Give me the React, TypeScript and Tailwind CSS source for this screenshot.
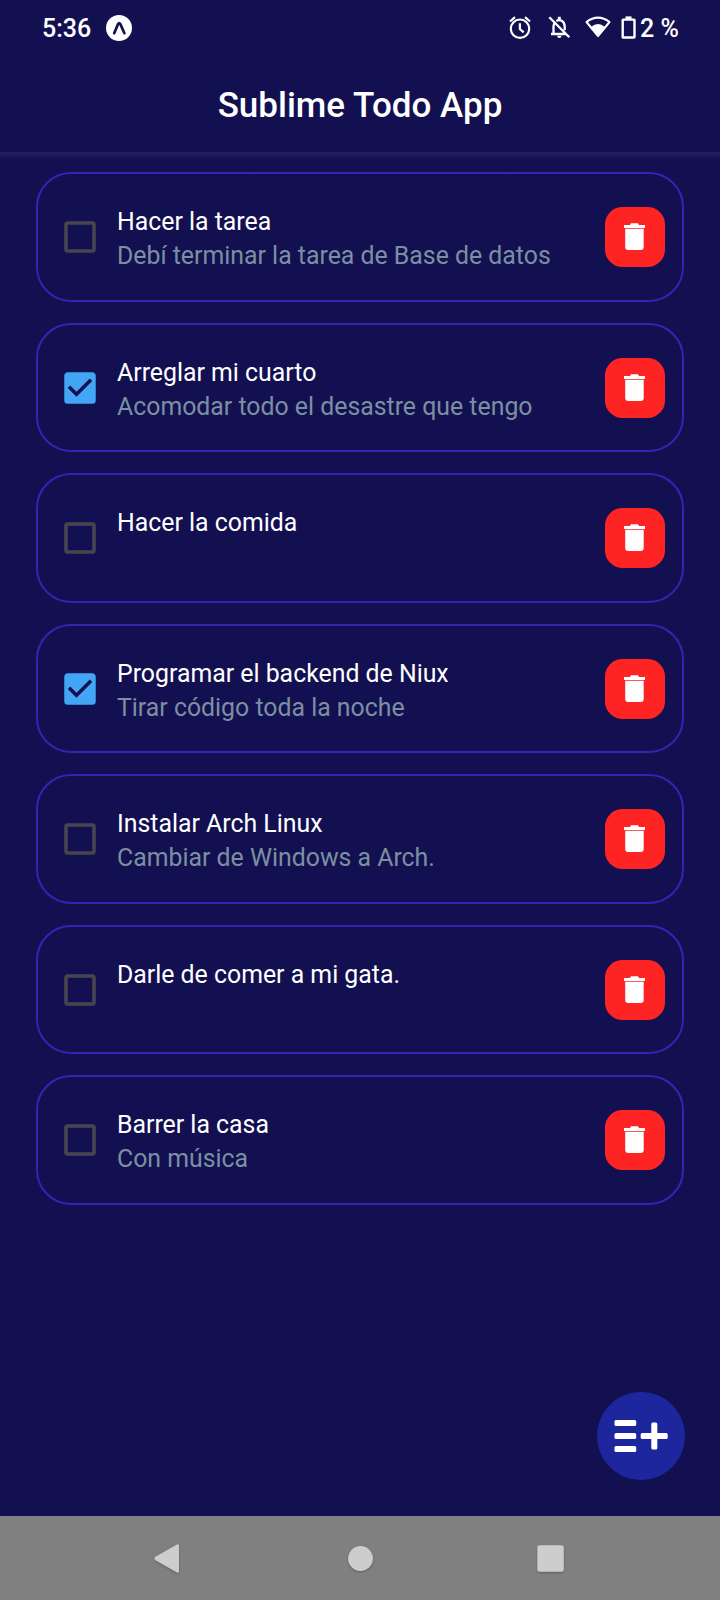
type Todo = { title: string; detail?: string; done?: boolean };

const todos: Todo[] = [
  { title: "Hacer la tarea", detail: "Debí terminar la tarea de Base de datos" },
  { title: "Arreglar mi cuarto", detail: "Acomodar todo el desastre que tengo", done: true },
  { title: "Hacer la comida" },
  { title: "Programar el backend de Niux", detail: "Tirar código toda la noche", done: true },
  { title: "Instalar Arch Linux", detail: "Cambiar de Windows a Arch." },
  { title: "Darle de comer a mi gata." },
  { title: "Barrer la casa", detail: "Con música" },
];

function StatusBar() {
  return (
    <div className="flex h-14 items-center pl-[42px] pr-[42px] text-[25px] font-medium leading-none">
      <span className="w-[64px]">5:36</span>
      <svg className="h-[26px] w-[26px]" viewBox="0 0 26 26">
        <circle cx="13" cy="13" r="13" fill="#fff" />
        <path d="M8.2 18.2 12 9.2Q13.2 7.2 14.4 9.2L18.4 18.2" fill="none" stroke="#131051" strokeWidth="2.7" strokeLinecap="round" />
      </svg>
      <div className="ml-auto flex items-center">
        <svg className="mr-[15px] h-6 w-6" viewBox="0 0 24 24" fill="none" stroke="#fff" strokeWidth="2.2">
          <circle cx="12" cy="12.7" r="9.2" />
          <path d="M11.9 7.3v5.8l3.8 3.2M2 5.5l5-4.4M22 5.5l-5-4.4" />
        </svg>
        <svg className="mr-[14px] h-6 w-6" viewBox="0 0 24 24" fill="none" stroke="#fff" strokeWidth="2.3">
          <path d="M2.3 1.2 22.3 21.2M4 18h14.5M6.5 18v-7.5q0-2 1.2-3.6M9.3 5Q12 3.4 14.8 4.8q2.9 1.7 2.9 6v3.4" />
          <path d="M12.3 .8v3" strokeWidth="3" />
          <path d="M10 19.8h4.6q-.4 2.2-2.3 2.2T10 19.8z" fill="#fff" stroke="none" />
        </svg>
        <svg className="mr-[10px] h-6 w-[26px]" viewBox="0 0 26 24">
          <path d="M1.5 6Q13-2.8 24.5 6L13 20z" fill="none" stroke="#fff" strokeWidth="2" strokeLinejoin="round" />
          <path d="M6 11Q13 5.2 20 11L13 20z" fill="#fff" />
        </svg>
        <svg className="mr-[4px] h-6 w-[15px]" viewBox="0 0 15 24">
          <path d="M4.5 .4h6v3.4h-6z" fill="#fff" />
          <rect x="1.7" y="3.6" width="11.8" height="17.9" rx="0.5" fill="none" stroke="#fff" strokeWidth="2.4" />
        </svg>
        <span className="w-[38px] whitespace-nowrap">2 %</span>
      </div>
    </div>
  );
}

function Checkbox({ done }: { done?: boolean }) {
  return (
    <svg className="h-[42px] w-[42px] shrink-0" viewBox="0 0 24 24">
      {done ? (
        <path fill="#42a5f5" d="M10 17l-5-5 1.41-1.42L10 14.17l7.59-7.59L19 8M19 3H5c-1.11 0-2 .89-2 2v14a2 2 0 002 2h14a2 2 0 002-2V5c0-1.11-.9-2-2-2z" />
      ) : (
        <rect x="4" y="4" width="16" height="16" rx="1" fill="none" stroke="#49454f" strokeWidth="2" />
      )}
    </svg>
  );
}

function TodoCard({ todo }: { todo: Todo }) {
  return (
    <li className="flex h-[129.5px] items-center rounded-[35px] border-2 border-[#3822b4] pl-[21px] pr-[17px] pt-[0.5px]">
      <Checkbox done={todo.done} />
      <div className="ml-[16px] mt-[4px] h-[68px] flex-1 whitespace-nowrap text-[24.85px] leading-[34px]">
        <p className="text-white">{todo.title}</p>
        <p className="text-[#7b8fa1]">{todo.detail}</p>
      </div>
      <button aria-label="Eliminar" className="flex h-[60px] w-[60px] items-center justify-center rounded-[17.5px] bg-[#ff2424]">
        <svg className="mb-px mr-px h-[27px] w-[21px]" viewBox="0 0 21 27" fill="#fff">
          <path d="M0 1.9h6L7 .3h7l1 1.6h6V5H0zM1.2 5.8h18.5V24a3 3 0 01-3 3H4.2a3 3 0 01-3-3z" />
        </svg>
      </button>
    </li>
  );
}

export default function App() {
  return (
    <div className="flex h-[1600px] w-[720px] flex-col bg-[#131051] font-[Roboto,sans-serif] text-white">
      <StatusBar />
      <h1 className="flex h-24 items-center justify-center pt-1 text-[35px] font-medium">Sublime Todo App</h1>
      <div className="h-5 bg-linear-to-b from-[#26205e] via-[#161253] via-30% to-[#131051] to-50%" />
      <ul className="flex flex-1 flex-col gap-[21px] px-9">
        {todos.map((t) => (
          <TodoCard key={t.title} todo={t} />
        ))}
      </ul>
      <button aria-label="Agregar" className="mb-[35.6px] ml-auto mr-[35px] flex h-[88.4px] w-[88px] shrink-0 items-center justify-center rounded-full bg-[#1e269e]">
        <svg className="h-8 w-[54px]" viewBox="0 0 54 32" fill="#fff">
          <rect x="0.5" y="0" width="21.7" height="6" rx="1.5" />
          <rect x="0.5" y="13" width="21.7" height="6" rx="1.5" />
          <rect x="0.5" y="26" width="21.7" height="6" rx="1.5" />
          <rect x="26.7" y="13" width="27" height="6" rx="1.5" />
          <rect x="37.3" y="2.5" width="6" height="27" rx="1.5" />
        </svg>
      </button>
      <nav className="flex h-[84px] shrink-0 items-center bg-[#808080] pl-[154px] pr-[156px]">
        <svg className="h-[30px] w-full overflow-visible drop-shadow-[0_1px_1px_rgba(0,0,0,0.25)]" viewBox="0 0 410 30" fill="#cdcdcd">
          <path d="M1 14Q0 15.5 1 17L23 29.5Q25 30.3 25 28V3Q25 .7 23 1.5z" />
          <circle cx="206.5" cy="15.5" r="12.4" />
          <rect x="383.3" y="2.3" width="26.5" height="26.5" rx="2" />
        </svg>
      </nav>
    </div>
  );
}
